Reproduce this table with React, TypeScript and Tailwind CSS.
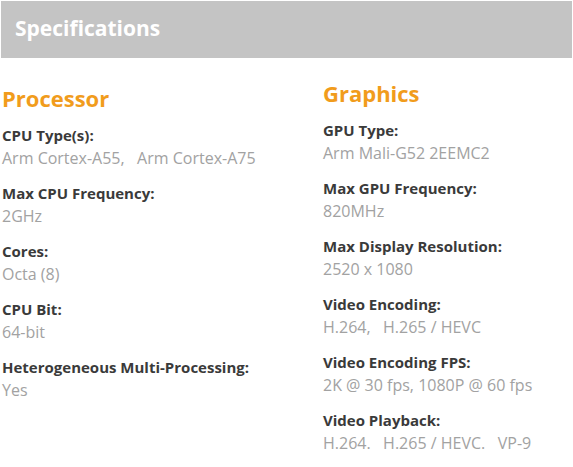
import React from 'react';

type Spec = { label: string; value: string };

const processor: Spec[] = [
  { label: 'CPU Type(s):', value: 'Arm Cortex-A55,\u00a0\u00a0 Arm Cortex-A75' },
  { label: 'Max CPU Frequency:', value: '2GHz' },
  { label: 'Cores:', value: 'Octa (8)' },
  { label: 'CPU Bit:', value: '64-bit' },
  { label: 'Heterogeneous Multi-Processing:', value: 'Yes' },
];

const graphics: Spec[] = [
  { label: 'GPU Type:', value: 'Arm Mali-G52 2EEMC2' },
  { label: 'Max GPU Frequency:', value: '820MHz' },
  { label: 'Max Display Resolution:', value: '2520 x 1080' },
  { label: 'Video Encoding:', value: 'H.264,\u00a0\u00a0 H.265 / HEVC' },
  { label: 'Video Encoding FPS:', value: '2K @ 30 fps, 1080P @ 60 fps' },
  { label: 'Video Playback:', value: 'H.264.\u00a0\u00a0 H.265 / HEVC.\u00a0\u00a0 VP-9' },
];

const SpecList: React.FC<{ title: string; items: Spec[] }> = ({ title, items }) => (
  <div>
    <h3 className="text-[22px] leading-[28px] font-bold text-[#f19c1c] mb-[12px]">{title}</h3>
    {items.map(item => (
      <div key={item.label} className="mb-[12px]">
        <p className="text-[15px] leading-[23px] font-bold text-[#3a3a3a]">{item.label}</p>
        <p className="text-[16px] leading-[23px] font-normal text-[#a2a2a2]">{item.value}</p>
      </div>
    ))}
  </div>
);

export default function App() {
  return (
    <div className="w-[573px] h-[467px] bg-white font-['Open_Sans',sans-serif] pt-[1px]">
      <div className="mx-[1px] h-[57px] bg-[#c4c4c4] pl-[14px] pt-[12px]">
        <h2 className="text-[21px] leading-[30px] font-bold text-white">Specifications</h2>
      </div>
      <div className="flex mt-[21px]">
        <div className="w-[321px] pl-[2px] pt-[5px]">
          <SpecList title="Processor" items={processor} />
        </div>
        <div className="flex-1 pl-[2px]">
          <SpecList title="Graphics" items={graphics} />
        </div>
      </div>
    </div>
  );
}
